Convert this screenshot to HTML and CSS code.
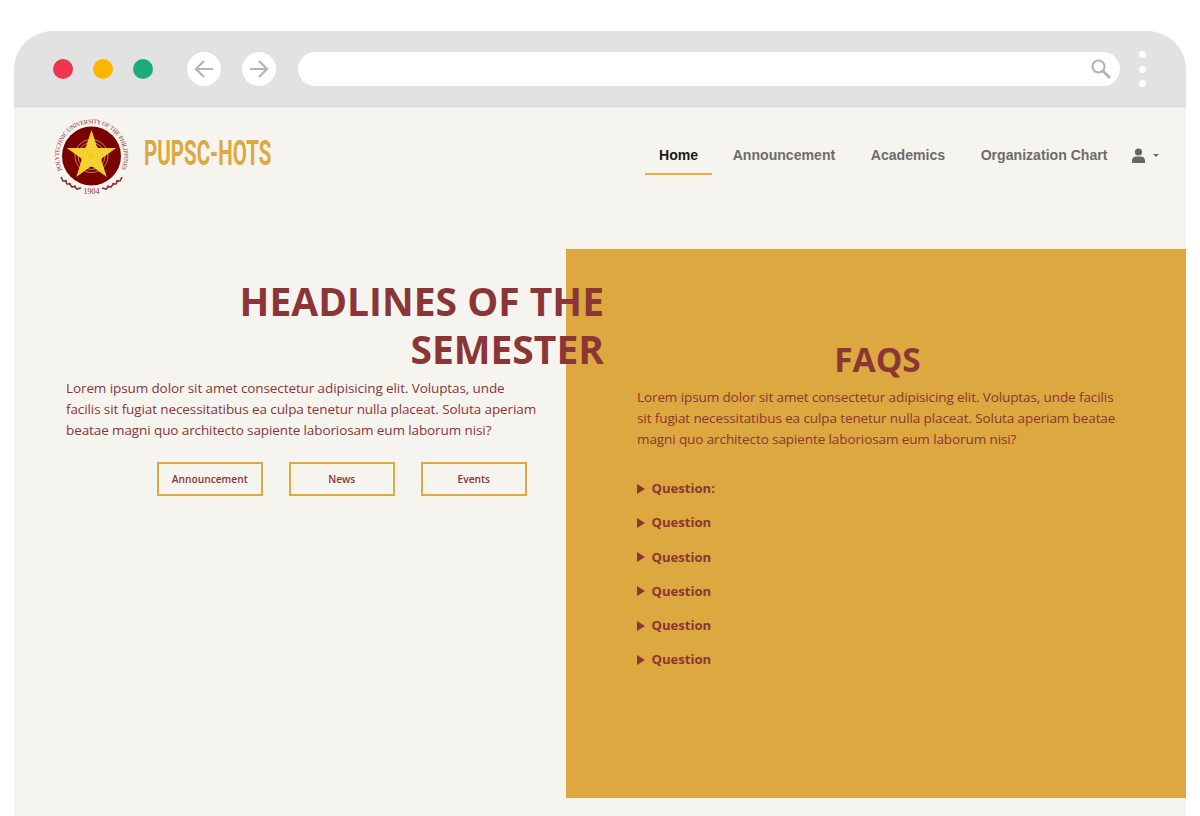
FILE: index.html
```html
<!DOCTYPE html>
<html lang="en">
<head>
    <meta charset="UTF-8">
    <meta name="viewport" content="width=device-width, initial-scale=1.0">
    <title>PUPSC-HOTS</title>
    <link rel="stylesheet" href="styles.css">
</head>
<body>
    <div class="browser">
        <div class="browser-bar">
            <span class="dot dot-red"></span>
            <span class="dot dot-yellow"></span>
            <span class="dot dot-green"></span>
            <span class="round-btn">
                <svg width="24" height="24" viewBox="0 0 24 24" fill="none" stroke="#b4b4b4" stroke-width="2.2">
                    <path d="M21 12H4M12 4l-8 8 8 8"/>
                </svg>
            </span>
            <span class="round-btn">
                <svg width="24" height="24" viewBox="0 0 24 24" fill="none" stroke="#b4b4b4" stroke-width="2.2">
                    <path d="M3 12h17M12 4l8 8-8 8"/>
                </svg>
            </span>
            <div class="address">
                <svg width="22" height="22" viewBox="0 0 22 22" fill="none" stroke="#b4b4b4" stroke-width="2.2">
                    <circle cx="8.5" cy="8.5" r="6"/>
                    <path d="M13 13l7 7" stroke-width="2.8"/>
                </svg>
            </div>
            <div class="kebab"><span></span><span></span><span></span></div>
        </div>

        <div class="page">
            <header class="site-header">
                <a class="brand">
                    <svg class="seal" width="76" height="76" viewBox="0 0 76 76">
                        <defs>
                            <path id="seal-arc" d="M8.200 50A32.500 32.500 0 1 1 66.800 50"/>
                        </defs>
                        <circle cx="37.500" cy="36" r="29.500" fill="#7a0000"/>
                        <path d="M37.500 10L43.400 27.900L62.200 28L47 39.100L52.800 57L37.500 46L22.200 57L28 39.100L12.800 28L31.600 27.900Z" fill="#f5cf1a"/>
                        <g fill="none" stroke="#f3dca0" stroke-width="0.6">
                            <circle cx="37.500" cy="36" r="16.500"/>
                            <circle cx="37.500" cy="36" r="13.500"/>
                            <circle cx="37.500" cy="36" r="10.500"/>
                            <circle cx="37.500" cy="36" r="7.500"/>
                            <circle cx="37.500" cy="36" r="4.500"/>
                        </g>
                        <text class="seal-text"><textPath href="#seal-arc" textLength="130" lengthAdjust="spacing">POLYTECHNIC UNIVERSITY OF THE PHILIPPINES</textPath></text>
                        <text class="seal-year" x="37.500" y="74" text-anchor="middle">1904</text>
                        <g fill="none" stroke="#8c2f2f" stroke-width="1.6">
                            <path d="M7 57l2 4 4 0M11 60l2 4 4 0M15 63l3 4 4-1M20 66l3 3 4-1"/>
                            <path d="M68 57l-2 4-4 0M64 60l-2 4-4 0M60 63l-3 4-4-1M55 66l-3 3-4-1"/>
                        </g>
                    </svg>
                    <span class="brand-name">PUPSC-HOTS</span>
                </a>
                <nav class="nav">
                    <a class="nav-link active">Home</a>
                    <a class="nav-link">Announcement</a>
                    <a class="nav-link">Academics</a>
                    <a class="nav-link">Organization Chart</a>
                    <a class="user-menu">
                        <svg width="13" height="15" viewBox="0 0 13 15" fill="#666">
                            <circle cx="6.500" cy="4" r="3.600"/>
                            <path d="M0 15v-2.500C0 10 2 8.500 4.500 8.500h4c2.500 0 4.500 1.500 4.500 4V15z"/>
                        </svg>
                        <span class="caret"></span>
                    </a>
                </nav>
            </header>

            <main class="hero">
                <section class="headlines">
                    <h1>HEADLINES OF THE SEMESTER</h1>
                    <p>Lorem ipsum dolor sit amet consectetur adipisicing elit. Voluptas, unde facilis sit fugiat necessitatibus ea culpa tenetur nulla placeat. Soluta aperiam beatae magni quo architecto sapiente laboriosam eum laborum nisi?</p>
                    <div class="hero-buttons">
                        <button class="outline-btn">Announcement</button>
                        <button class="outline-btn">News</button>
                        <button class="outline-btn">Events</button>
                    </div>
                </section>
                <section class="faqs">
                    <h2>FAQS</h2>
                    <p>Lorem ipsum dolor sit amet consectetur adipisicing elit. Voluptas, unde facilis sit fugiat necessitatibus ea culpa tenetur nulla placeat. Soluta aperiam beatae magni quo architecto sapiente laboriosam eum laborum nisi?</p>
                    <ul class="questions">
                        <li>Question:</li>
                        <li>Question</li>
                        <li>Question</li>
                        <li>Question</li>
                        <li>Question</li>
                        <li>Question</li>
                    </ul>
                </section>
            </main>
        </div>
    </div>
</body>
</html>
```

FILE: styles.css
```css
html, body {
    height: 100%;
}

body {
    margin: 0;
    padding: 31px 14px 0;
    box-sizing: border-box;
    background-color: #fff;
    font-family: 'Open Sans', sans-serif;
    overflow: hidden;
}

.browser {
    display: flex;
    flex-direction: column;
    height: 785px;
}

.browser-bar {
    display: flex;
    align-items: center;
    height: 76px;
    flex-shrink: 0;
    padding: 1px 40px 0 39px;
    box-sizing: border-box;
    background-color: #e2e2e2;
    border-bottom: 1px solid #d6d6d6;
    border-radius: 38px 38px 0 0;
}

.dot {
    width: 20px;
    height: 20px;
    margin-right: 20px;
    border-radius: 50%;
}

.dot-red { background-color: #ee3450; }
.dot-yellow { background-color: #ffb400; }
.dot-green { background-color: #1dab7c; }

.round-btn {
    display: flex;
    align-items: center;
    justify-content: center;
    width: 34px;
    height: 34px;
    margin-right: 22px;
    background-color: #fff;
    border-radius: 50%;
}

.dot-green + .round-btn {
    margin-left: 14px;
    margin-right: 21px;
}

.address {
    display: flex;
    align-items: center;
    justify-content: flex-end;
    flex: 1;
    height: 34px;
    padding-right: 8px;
    background-color: #fff;
    border-radius: 17px;
}

.kebab {
    display: flex;
    flex-direction: column;
    gap: 7.5px;
    margin-left: 19px;
}

.kebab span {
    width: 7px;
    height: 7px;
    background-color: #fff;
    border-radius: 50%;
}

.page {
    flex: 1;
    display: flex;
    flex-direction: column;
    background-color: #f6f4ef;
}

.site-header {
    display: flex;
    align-items: flex-start;
    justify-content: space-between;
    height: 142px;
    flex-shrink: 0;
    padding: 13px 27px 0 40px;
    box-sizing: border-box;
}

.brand {
    display: flex;
    align-items: center;
    gap: 14px;
    height: 76px;
}

.seal {
    flex-shrink: 0;
    overflow: visible;
}

.seal-text {
    font-family: 'Liberation Serif', serif;
    font-size: 6.2px;
    fill: #8c2f2f;
}

.seal-year {
    font-family: 'Liberation Serif', serif;
    font-size: 8px;
    fill: #8c2f2f;
}

.brand-name {
    display: block;
    width: 127px;
    margin-top: -8px;
    color: #dca83f;
    font-family: 'Liberation Sans Narrow', 'Roboto', sans-serif;
    font-size: 35px;
    font-weight: bold;
    line-height: 40px;
    white-space: nowrap;
    transform: scaleX(0.587);
    transform-origin: left center;
}

.nav {
    display: flex;
    align-items: center;
    gap: 7.5px;
    margin-top: 16px;
    font-family: 'Liberation Sans', Arial, sans-serif;
    font-size: 14.1px;
    font-weight: bold;
}

.nav-link {
    padding: 11px 14px 10px;
    color: #6c6c6c;
    border-bottom: 2px solid transparent;
}

.nav-link.active {
    margin-right: -1px;
    color: #1a1a1a;
    border-bottom-color: #e8ab3e;
}

.user-menu {
    display: flex;
    align-items: center;
    gap: 8px;
    margin-left: 3px;
}

.caret {
    width: 0;
    height: 0;
    border-left: 3.5px solid transparent;
    border-right: 3.5px solid transparent;
    border-top: 3.5px solid #666;
}

.hero {
    flex: 1;
    display: flex;
    align-items: flex-start;
}

.headlines {
    position: relative;
    z-index: 1;
    box-sizing: border-box;
    width: 552px;
    padding: 28px 0 0 52px;
    color: #8c3537;
}

.headlines h1 {
    margin: 0 -38px 0 0;
    font-size: 39px;
    font-weight: 700;
    line-height: 48px;
    text-align: right;
}

.headlines p {
    width: 472px;
    margin: 5px 0 0;
    font-size: 13.5px;
    letter-spacing: -0.1px;
    line-height: 21px;
}

.hero-buttons {
    display: flex;
    gap: 26.5px;
    margin: 21px 0 0 91px;
}

.outline-btn {
    width: 105.5px;
    height: 34px;
    padding: 0;
    background: none;
    border: 2px solid #e0a941;
    color: #8c3537;
    font-family: 'Open Sans', sans-serif;
    font-size: 10.2px;
    font-weight: 600;
}

.faqs {
    box-sizing: border-box;
    width: 620px;
    height: 549px;
    padding: 89px 70px 0 71px;
    background-color: #dca83f;
    color: #8c3537;
}

.faqs h2 {
    margin: 0;
    padding-left: 2px;
    font-size: 33.5px;
    font-weight: 700;
    line-height: 42px;
    text-align: center;
}

.faqs p {
    margin: 7px 0 0;
    font-size: 13.5px;
    letter-spacing: -0.1px;
    line-height: 21px;
}

.questions {
    display: flex;
    flex-direction: column;
    gap: 15px;
    margin: 29px 0 0;
    padding: 0;
    list-style: none;
}

.questions li {
    display: flex;
    align-items: center;
    gap: 6.5px;
    font-size: 13.1px;
    font-weight: 700;
    line-height: 19.25px;
}

.questions li::before {
    content: "";
    border-left: 8px solid #8c3537;
    border-top: 5px solid transparent;
    border-bottom: 5px solid transparent;
}
```
